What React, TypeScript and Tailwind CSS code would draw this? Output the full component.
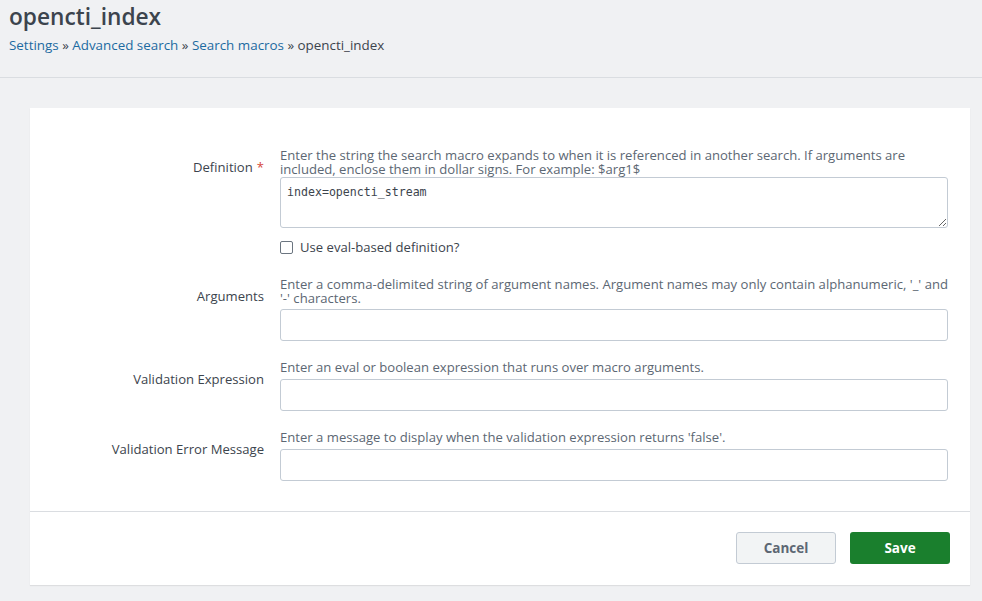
import { useState } from 'react';

const sans = { fontFamily: '"Open Sans", Lato, Arial, sans-serif' };

function Field({
  label,
  required,
  help,
  children,
  className = '',
}: {
  label: string;
  required?: boolean;
  help: string;
  children: React.ReactNode;
  className?: string;
}) {
  return (
    <div className={`flex ${className}`}>
      <div className="w-[250px] shrink-0 pt-[12px] pr-[16px] text-right text-[13.1px] leading-[14px] text-[#3c444d]">
        {label}
        {required && <span className="ml-[4px] text-[#d6463a]">*</span>}
      </div>
      <div className="flex-1">
        <p className="text-[13.1px] leading-[14px] text-[#5c6773]">{help}</p>
        {children}
      </div>
    </div>
  );
}

export default function App() {
  const [definition, setDefinition] = useState('index=opencti_stream');
  const [useEval, setUseEval] = useState(false);

  return (
    <div className="min-h-[601px] bg-[#f0f1f3]" style={sans}>
      <header className="h-[78px] border-b border-[#dadde1] px-[9px] pt-[3px]">
        <h1 className="text-[22.7px] font-semibold leading-[28px] text-[#3c444d]">opencti_index</h1>
        <nav className="mt-[6px] text-[13.4px] leading-[16px] text-[#3c444d]">
          <a className="text-[#1c6aa1]">Settings</a> »{' '}
          <a className="text-[#1c6aa1]">Advanced search</a> »{' '}
          <a className="text-[#1c6aa1]">Search macros</a> » opencti_index
        </nav>
      </header>

      <main className="px-[30px] pt-[30px] pb-[16px] pr-[12px]">
        <div className="bg-white shadow-[0_1px_1px_rgba(0,0,0,0.08)]">
          <div className="pt-[40px] pb-[30px] pr-[22px]">
            <Field
              label="Definition"
              required
              help="Enter the string the search macro expands to when it is referenced in another search. If arguments are included, enclose them in dollar signs. For example: $arg1$"
            >
              <textarea
                value={definition}
                onChange={(e) => setDefinition(e.target.value)}
                className="mt-[1px] block h-[51px] w-full rounded-[3px] border border-[#c3cbd4] bg-white px-[6px] py-[6px] text-[11.6px] leading-[16px] text-[#3c444d] outline-none"
                style={{ fontFamily: '"DejaVu Sans Mono", monospace' }}
              />
              <label className="mt-[12px] flex items-center gap-[7px] text-[13.1px] leading-[14px] text-[#3c444d]">
                <input
                  type="checkbox"
                  checked={useEval}
                  onChange={(e) => setUseEval(e.target.checked)}
                  className="h-[13px] w-[13px] appearance-none rounded-[2px] border border-[#6b7580] bg-white"
                />
                Use eval-based definition?
              </label>
            </Field>

            <Field
              className="mt-[23px]"
              label="Arguments"
              help="Enter a comma-delimited string of argument names. Argument names may only contain alphanumeric, '_' and '-' characters."
            >
              <input className="mt-[4px] block h-[32px] w-full rounded-[3px] border border-[#c3cbd4] bg-white outline-none" />
            </Field>

            <Field
              className="mt-[19px]"
              label="Validation Expression"
              help="Enter an eval or boolean expression that runs over macro arguments."
            >
              <input className="mt-[5px] block h-[32px] w-full rounded-[3px] border border-[#c3cbd4] bg-white outline-none" />
            </Field>

            <Field
              className="mt-[19px]"
              label="Validation Error Message"
              help="Enter a message to display when the validation expression returns 'false'."
            >
              <input className="mt-[5px] block h-[32px] w-full rounded-[3px] border border-[#c3cbd4] bg-white outline-none" />
            </Field>
          </div>

          <div className="flex justify-end gap-[14px] border-t border-[#dadde1] px-[20px] pt-[20px] pb-[21px]">
            <button className="h-[32px] w-[100px] rounded-[3px] border border-[#c3cbd4] bg-[#f2f4f5] text-[13.5px] font-bold text-[#5c6773]">
              Cancel
            </button>
            <button className="h-[32px] w-[100px] rounded-[3px] bg-[#1a7f2d] text-[13.5px] font-bold text-white">
              Save
            </button>
          </div>
        </div>
      </main>
    </div>
  );
}
